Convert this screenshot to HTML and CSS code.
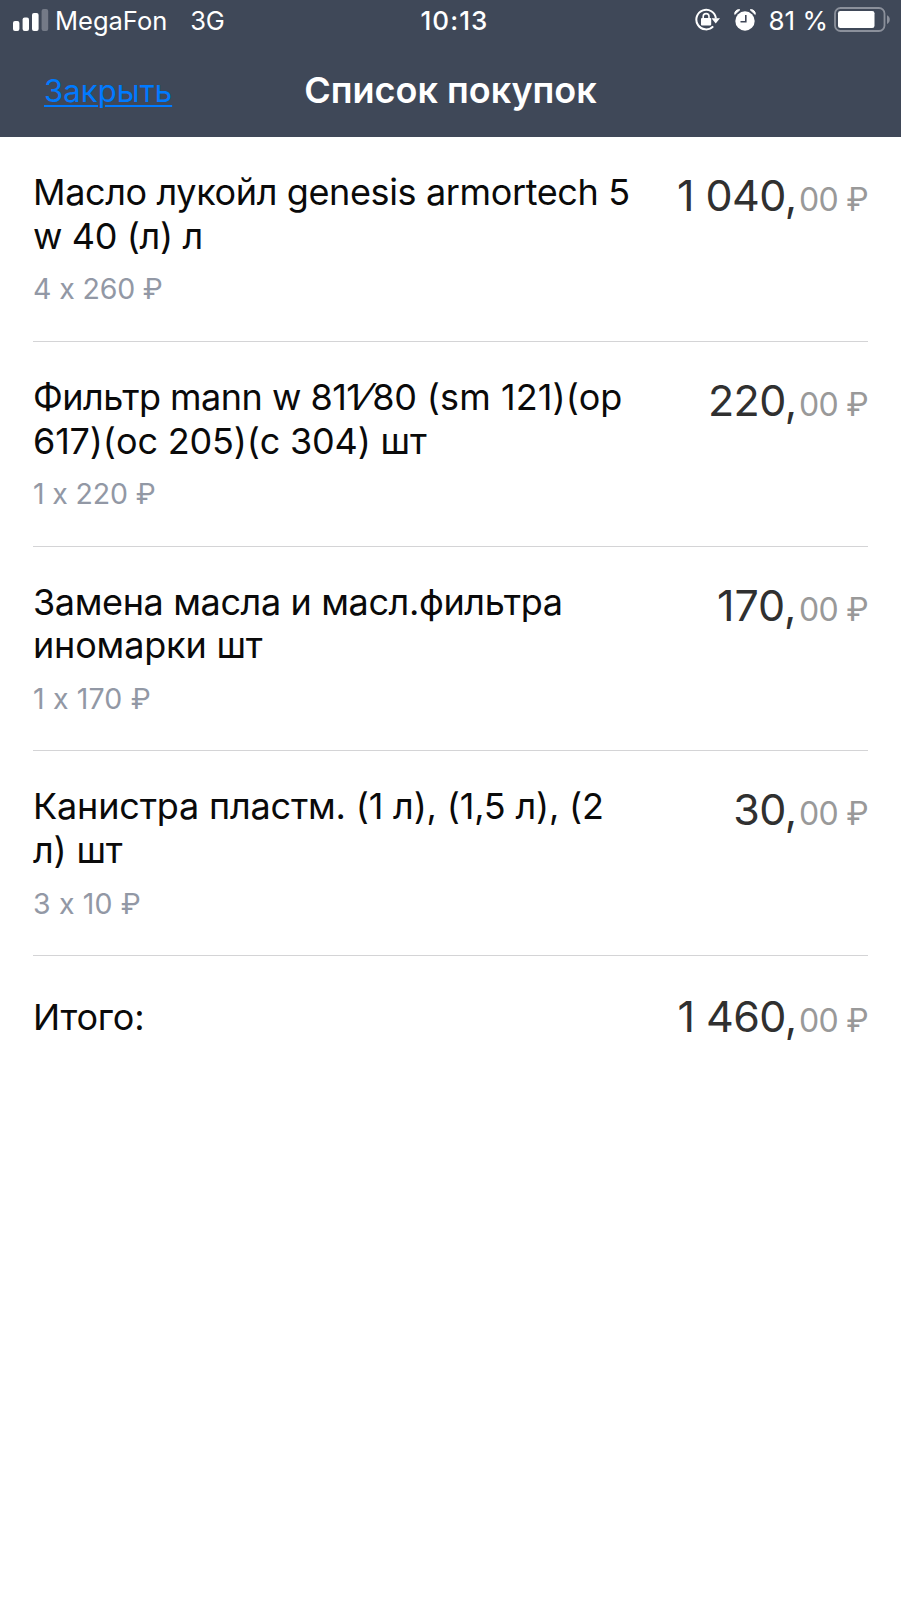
FILE: index.html
```html
<!DOCTYPE html>
<html lang="ru">
<head>
<meta charset="utf-8">
<title>Список покупок</title>
<link rel="stylesheet" href="styles.css">
</head>
<body>
<header class="header">
  <div class="status">
    <div class="status-left">
      <svg class="signal" width="36" height="23" viewBox="0 0 36 23"><rect x="0" y="12" width="6.4" height="10" rx="2" fill="#fff"/><rect x="9.6" y="8.5" width="6.4" height="13.5" rx="2" fill="#fff"/><rect x="19" y="4" width="6.6" height="18" rx="2" fill="#fff"/><rect x="28.6" y="0" width="6.6" height="22" rx="2" fill="#747a87"/></svg>
      <span class="carrier">MegaFon</span>
      <span class="network">3G</span>
    </div>
    <div class="time">10:13</div>
    <div class="status-right">
      <svg class="lock" width="25" height="24" viewBox="0 0 25 24"><path d="M18.2 18.4A9.8 9.8 0 1 1 20.9 10.5" fill="none" stroke="#fff" stroke-width="2"/><path d="M16.5 10.3H25L20.7 15.5Z" fill="#fff"/><rect x="6" y="10" width="10.2" height="7.6" rx="1" fill="#fff"/><path d="M8.2 11V8.5a2.9 2.9 0 0 1 5.8 0V11" fill="none" stroke="#fff" stroke-width="1.6"/></svg>
      <svg class="alarm" width="22" height="23" viewBox="0 0 22 23"><circle cx="11" cy="12" r="9.7" fill="#fff"/><path d="M.8 5.4A4 4 0 0 1 5.8.8Z M21.2 5.4A4 4 0 0 0 16.2.8Z" fill="#fff" stroke="#fff" stroke-linejoin="round"/><path d="M11.8 6V12.7H6.5" fill="none" stroke="#404757" stroke-width="1.6"/></svg>
      <span class="percent">81 %</span>
      <svg class="battery" width="57" height="26" viewBox="0 0 57 26"><rect x="1" y="1" width="49.5" height="23" rx="5.5" fill="none" stroke="#8b909b" stroke-width="1.8"/><rect x="4" y="4" width="36.5" height="17" rx="2.3" fill="#fff"/><path d="M53 8.3c3.7 1.4 3.7 7.2 0 8.6Z" fill="#8b909b"/></svg>
    </div>
  </div>
  <nav class="nav">
    <a class="close">Закрыть</a>
    <h1 class="heading">Список покупок</h1>
  </nav>
</header>
<main class="list">
  <section class="item">
    <div class="info"><p class="name"><span class="snug">Масло лукойл genesis armortech 5</span><br><span class="snug">w 40 (л) л</span></p><p class="qty">4 x 260 ₽</p></div>
    <div class="price"><span class="whole">1<span class="thousand"> </span>040,</span><span class="cents">00 ₽</span></div>
  </section>
  <section class="item">
    <div class="info"><p class="name"><span class="snug-more">Фильтр mann w 811</span><span class="slash">⁄</span>80 <span class="loose">(sm 121)</span>(ор<br>617)<span class="loose">(</span>ос 205)(с 304) шт</p><p class="qty">1 x 220 ₽</p></div>
    <div class="price"><span class="whole">220,</span><span class="cents">00 ₽</span></div>
  </section>
  <section class="item">
    <div class="info"><p class="name"><span class="snug">Замена масла и масл.фильтра</span><br>иномарки шт</p><p class="qty qty-wide">1 x 170 ₽</p></div>
    <div class="price"><span class="whole whole-wide">170,</span><span class="cents">00 ₽</span></div>
  </section>
  <section class="item">
    <div class="info"><p class="name">Канистра пластм. (1 л), (1,5 л), (2<br>л) шт</p><p class="qty qty-wide">3 x 10 ₽</p></div>
    <div class="price"><span class="whole">30,</span><span class="cents">00 ₽</span></div>
  </section>
  <section class="total">
    <p class="name">Итого:</p>
    <div class="price"><span class="whole">1<span class="thousand"> </span>460,</span><span class="cents">00 ₽</span></div>
  </section>
</main>
</body>
</html>
```

FILE: styles.css
```css
* { box-sizing: border-box; }
body { margin: 0; background: #fff; color: #0a0a0a; font-family: Inter, "Liberation Sans", sans-serif; white-space: nowrap; }
p, h1 { margin: 0; font-weight: 400; }
svg { display: block; flex: none; }
.header { height: 137px; background: #3f4858; color: #fff; }
.status { height: 42px; display: grid; grid-template-columns: 1fr auto 1fr; align-items: center; padding: 0 10px 0 13px; font-size: 25.5px; line-height: 42px; }
.status-left, .status-right { display: flex; align-items: center; }
.status-right { justify-content: flex-end; }
.signal { margin-top: -2px; }
.carrier { margin-left: 6px; letter-spacing: 0; }
.network { margin-left: 23px; letter-spacing: -0.3px; }
.time { font-size: 26px; font-weight: 550; letter-spacing: 1.1px; padding-left: 5px; }
.lock { margin-right: 14px; margin-top: -2px; }
.alarm { margin-right: 12px; margin-top: -2px; }
.percent { font-size: 26px; letter-spacing: 0; margin-right: 6px; }
.battery { margin-top: -2px; }
.nav { height: 95px; display: grid; grid-template-columns: 1fr auto 1fr; align-items: center; padding-left: 44px; padding-right: 44px; }
.close { font-size: 31px; letter-spacing: 0.1px; margin-top: 2px; color: #007aff; text-decoration: underline; text-decoration-thickness: 2px; text-underline-offset: 3px; justify-self: start; }
.heading { font-size: 36px; font-weight: 600; line-height: 50px; }
.list { padding: 0 33px; }
.item { height: 204.8px; border-bottom: 1px solid #d4d4d6; display: flex; justify-content: space-between; padding-top: 34px; }
.name, .qty { font-feature-settings: "calt" 0; }
.name { font-size: 36px; line-height: 43.7px; letter-spacing: -0.18px; }
.snug { letter-spacing: -0.37px; }
.snug-more { letter-spacing: -0.52px; }
.loose { letter-spacing: 0.1px; }
/* Keeps the digits around the slash at full size. */
.slash { font-size: 36.5px; line-height: 0; margin: 0 3px 0 2px; font-feature-settings: "calt" 0, "frac" 0; }
.qty { font-size: 28.5px; line-height: 40px; margin-top: 11px; color: #9298a5; letter-spacing: -0.15px; }
.qty-wide { letter-spacing: 0.15px; }
.price { color: #303030; font-size: 43px; line-height: 50px; margin-top: -1px; }
.whole { letter-spacing: -0.6px; }
.whole-wide { letter-spacing: 0; }
.thousand { letter-spacing: -0.4px; }
.cents { font-size: 32px; color: #999; margin-left: 2.5px; letter-spacing: -0.7px; }
.total { display: flex; justify-content: space-between; padding-top: 36px; }
.total .name { padding-top: 4px; }
```
